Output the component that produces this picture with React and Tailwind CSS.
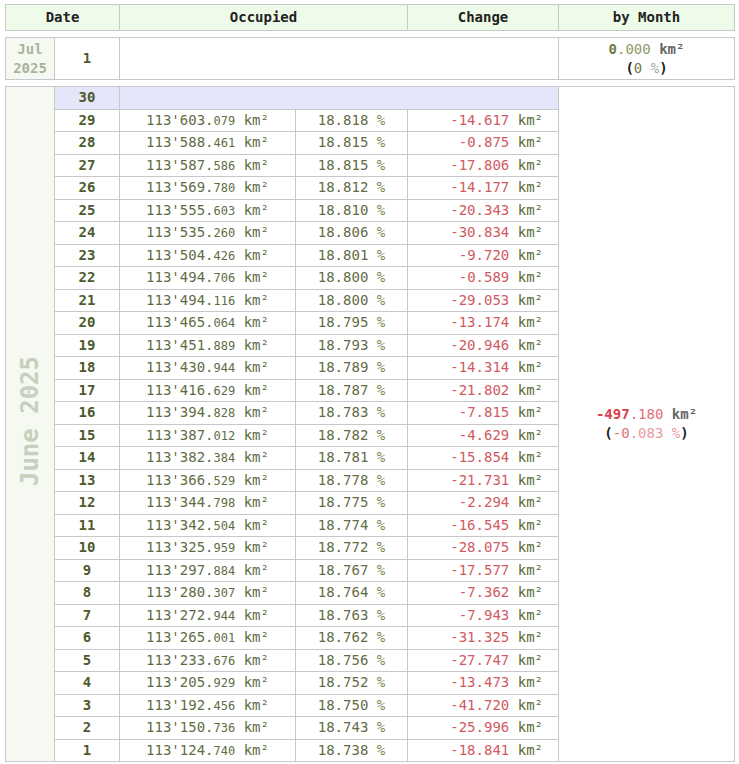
import React from 'react';

const rows = [
  [29, "113'603", '079', '18.818', '-14.617'],
  [28, "113'588", '461', '18.815', '-0.875'],
  [27, "113'587", '586', '18.815', '-17.806'],
  [26, "113'569", '780', '18.812', '-14.177'],
  [25, "113'555", '603', '18.810', '-20.343'],
  [24, "113'535", '260', '18.806', '-30.834'],
  [23, "113'504", '426', '18.801', '-9.720'],
  [22, "113'494", '706', '18.800', '-0.589'],
  [21, "113'494", '116', '18.800', '-29.053'],
  [20, "113'465", '064', '18.795', '-13.174'],
  [19, "113'451", '889', '18.793', '-20.946'],
  [18, "113'430", '944', '18.789', '-14.314'],
  [17, "113'416", '629', '18.787', '-21.802'],
  [16, "113'394", '828', '18.783', '-7.815'],
  [15, "113'387", '012', '18.782', '-4.629'],
  [14, "113'382", '384', '18.781', '-15.854'],
  [13, "113'366", '529', '18.778', '-21.731'],
  [12, "113'344", '798', '18.775', '-2.294'],
  [11, "113'342", '504', '18.774', '-16.545'],
  [10, "113'325", '959', '18.772', '-28.075'],
  [9, "113'297", '884', '18.767', '-17.577'],
  [8, "113'280", '307', '18.764', '-7.362'],
  [7, "113'272", '944', '18.763', '-7.943'],
  [6, "113'265", '001', '18.762', '-31.325'],
  [5, "113'233", '676', '18.756', '-27.747'],
  [4, "113'205", '929', '18.752', '-13.473'],
  [3, "113'192", '456', '18.750', '-41.720'],
  [2, "113'150", '736', '18.743', '-25.996'],
  [1, "113'124", '740', '18.738', '-18.841'],
];

const Cols = () => (
  <colgroup>
    <col className="w-[49px]" />
    <col className="w-[65px]" />
    <col className="w-[176px]" />
    <col className="w-[112px]" />
    <col className="w-[151px]" />
    <col className="w-[176px]" />
  </colgroup>
);

const td = 'border border-[#c8c8c8] p-0';
const tableCls = 'w-[729px] table-fixed border-collapse';

export default function App() {
  return (
    <div className="min-h-[764px] bg-white pt-[4px] pl-[5px] font-['DejaVu_Sans_Mono',monospace] text-[14px]">
      {/* header */}
      <table className={tableCls}>
        <Cols />
        <tbody>
          <tr className="h-[26px] bg-[#effbe9] font-bold text-[#222]">
            <td colSpan={2} className={`${td} text-center`}>Date</td>
            <td colSpan={2} className={`${td} text-center`}>Occupied</td>
            <td className={`${td} text-center`}>Change</td>
            <td className={`${td} text-center`}>by Month</td>
          </tr>
        </tbody>
      </table>

      {/* July */}
      <table className={`${tableCls} mt-[6px]`}>
        <Cols />
        <tbody>
          <tr className="h-[42px]">
            <td className={`${td} bg-[#f6f9f2] text-center font-bold leading-[19px] text-[#a9b49c]`}>
              Jul<br />2025
            </td>
            <td className={`${td} text-center font-bold text-[#4d5a2c]`}>1</td>
            <td colSpan={3} className={td}></td>
            <td className={`${td} text-center leading-[19px]`}>
              <span className="font-bold text-[#6e7d46]">0</span>
              <span className="text-[#8d9a6a]">.000</span>{' '}
              <span className="font-bold text-[#666]">km²</span>
              <br />
              <span className="font-bold text-[#222]">(</span>
              <span className="text-[#6e7d46]">0</span>{' '}
              <span className="text-[#a8a8a8]">%</span>
              <span className="font-bold text-[#222]">)</span>
            </td>
          </tr>
        </tbody>
      </table>

      {/* June */}
      <table className={`${tableCls} mt-[6px]`}>
        <Cols />
        <tbody>
          <tr className="h-[22.5px]">
            <td rowSpan={30} className={`${td} bg-[#f6f9f2] text-center align-middle`}>
              <span className="inline-block rotate-180 text-[24px] font-bold text-[#c6d0bc] [writing-mode:vertical-rl]">
                June 2025
              </span>
            </td>
            <td className={`${td} bg-[#e6e6fa] text-center font-bold text-[#4d5a2c]`}>30</td>
            <td colSpan={3} className={`${td} bg-[#e6e6fa]`}></td>
            <td rowSpan={30} className={`${td} text-center align-middle leading-[19px]`}>
              <span className="font-bold text-[#d9414b]">-497</span>
              <span className="text-[#e0707a]">.180</span>{' '}
              <span className="font-bold text-[#666]">km²</span>
              <br />
              <span className="font-bold text-[#222]">(</span>
              <span className="text-[#e0707a]">-0</span>
              <span className="text-[#eb9aa2]">.083 %</span>
              <span className="font-bold text-[#222]">)</span>
            </td>
          </tr>
          {rows.map(([d, big, small, pct, chg]) => (
            <tr key={d} className="h-[22.5px]">
              <td className={`${td} text-center font-bold text-[#4d5a2c]`}>{d}</td>
              <td className={`${td} text-center whitespace-nowrap text-[#5f6d45]`}>
                {big}.<span className="text-[12px]">{small}</span>{' '}
                <span className="text-[#5f6d45]">km²</span>
              </td>
              <td className={`${td} text-center whitespace-nowrap text-[#5f6d45]`}>
                {pct} <span className="text-[#7a8a55]">%</span>
              </td>
              <td className={`${td} pr-[15px] text-right whitespace-nowrap`}>
                <span className="text-[#d05a62]">{chg}</span>{' '}
                <span className="text-[#5b6b35]">km²</span>
              </td>
            </tr>
          ))}
        </tbody>
      </table>
    </div>
  );
}
